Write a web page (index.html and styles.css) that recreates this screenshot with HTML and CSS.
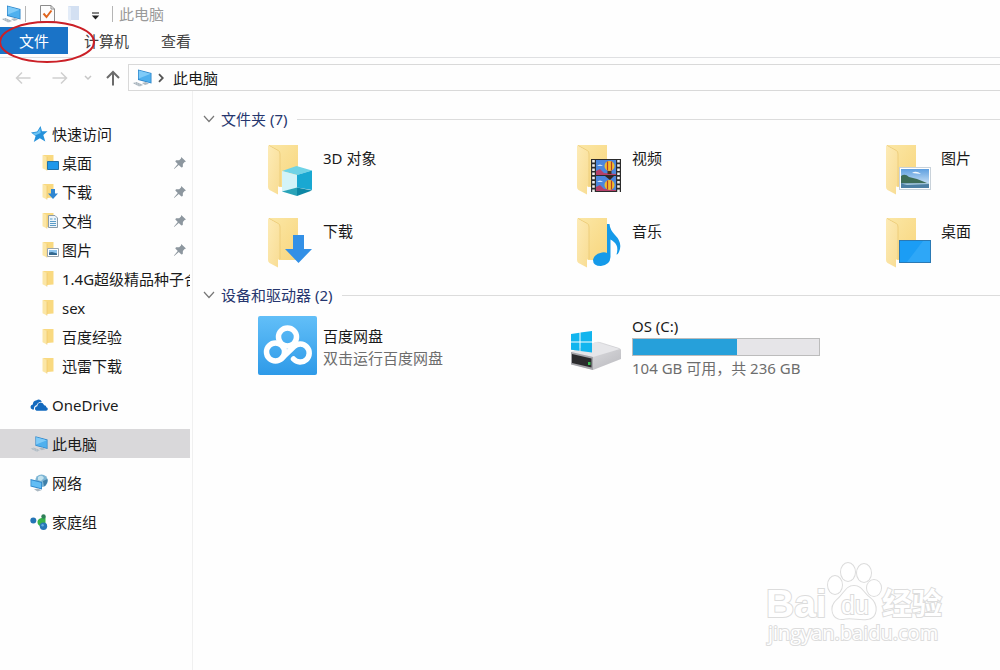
FILE: index.html
```html
<!DOCTYPE html>
<html lang="zh-CN">
<head>
    <meta charset="utf-8">
    <title>此电脑</title>
    <link rel="stylesheet" href="styles.css">
</head>
<body>
    <svg class="defs" aria-hidden="true">
        <defs>
            <linearGradient id="gBack" x1="0" y1="0" x2="1" y2="1"><stop offset="0" stop-color="#fbe7a6"/><stop offset="1" stop-color="#f8d67e"/></linearGradient>
            <linearGradient id="gFront" x1="0" y1="0" x2="1" y2="1"><stop offset="0" stop-color="#fdebb6"/><stop offset="1" stop-color="#f8dc92"/></linearGradient>
            <linearGradient id="gPan" x1="0" y1="0" x2="0" y2="1"><stop offset="0" stop-color="#62bff8"/><stop offset="1" stop-color="#2e9ae8"/></linearGradient>
            <linearGradient id="gSky" x1="0" y1="0" x2="0" y2="1"><stop offset="0" stop-color="#5e9fe0"/><stop offset="1" stop-color="#e4f1fb"/></linearGradient>
            <linearGradient id="gDisk" x1="0" y1="0" x2="1" y2="1"><stop offset="0" stop-color="#e9e9eb"/><stop offset="1" stop-color="#b9b9be"/></linearGradient>
        </defs>
        <symbol id="pc" viewBox="0 0 20 18">
            <path d="M6 .5 19.500 4V14.500L6 11Z" fill="#2f86c9"/>
            <path d="M6.800 1.600 18.700 4.700V13.400L6.800 10.300Z" fill="#4fb0ee"/>
            <path d="M6.800 1.600 18.700 4.700 6.800 9.500Z" fill="#7fcbf8"/>
            <path d="M10 14 14 13 17 14.800 13 16Z" fill="#aeb9c2"/>
            <path d="M.5 14 4.500 13 11.500 16 7 17.500Z" fill="#c3ccd3"/>
            <path d="M2 14.200 8.500 16.800M4 13.600 10 16.200" stroke="#8d9aa5" stroke-width=".6" stroke-dasharray="1.2 .8"/>
        </symbol>
        <symbol id="mini" viewBox="0 0 17 17">
            <path d="M1 1H11.500V14.500L5 15Z" fill="#f9d980"/>
            <path d="M.5 1 5 3V16.500L.5 14.200Z" fill="#fbe6a6"/>
            <path d="M5 3V16.500" stroke="#ecc462" stroke-width=".6"/>
        </symbol>
        <symbol id="folder" viewBox="0 0 46 54">
            <path d="M1 1H31V43H12V8Z" fill="url(#gBack)"/>
            <path d="M1 1.500 11.500 7Q13 8 13 10V41L11 43V50.500L2.500 46Q1 45 1 43Z" fill="url(#gFront)"/>
            <path d="M2 1.500 11.500 6.600Q13 7.500 13 10V42" fill="none" stroke="#ebc973" stroke-width=".8"/>
        </symbol>
        <symbol id="pin" viewBox="0 0 14 14">
            <path d="M8.2 1 13 5.6 11.6 6 9.9 8 9.8 11 8.4 11.6 5.8 9 1.2 13 1 12.6 4.8 8 2.3 5.6 3 4.2 6.2 4.2 8 2.5Z" fill="#8d979f"/>
        </symbol>
    </svg>

    <header class="titlebar">
        <svg class="pc-icon"><use href="#pc"/></svg>
        <span class="sep"></span>
        <svg class="doc-icon" viewBox="0 0 15 17">
            <path d="M.5.5H11L14.5 4V16.5H.5Z" fill="#fdfdfd" stroke="#8c8c8c"/>
            <path d="M11 .5V4H14.5" fill="none" stroke="#8c8c8c"/>
            <path d="M3.5 8.5 6.5 12 11.5 5.5" fill="none" stroke="#e0661f" stroke-width="2"/>
        </svg>
        <svg class="pale-icon" viewBox="0 0 13 17">
            <path d="M1 1H12V15H4Z" fill="#d3e0f2"/>
            <path d="M1 1 4 2.5V16.5L1 14.5Z" fill="#e3ecf8"/>
        </svg>
        <svg class="drop-icon" viewBox="0 0 9 8">
            <path d="M1 1H8" stroke="#333" stroke-width="1.2"/>
            <path d="M.8 3.6H8.2L4.5 7.4Z" fill="#222"/>
        </svg>
        <span class="sep"></span>
        <span class="title">此电脑</span>
    </header>

    <nav class="ribbon">
        <button class="tab tab-file">文件</button>
        <button class="tab">计算机</button>
        <button class="tab">查看</button>
        <svg class="mark" viewBox="0 0 98 44"><ellipse cx="47" cy="22" rx="47" ry="20" fill="none" stroke="#cb2027" stroke-width="2"/></svg>
    </nav>

    <div class="toolbar">
        <button class="nav-btn" aria-label="后退"><svg class="arrow" viewBox="0 0 16 14"><path d="M15.5 7H1.5M7 1.5 1.5 7 7 12.5" fill="none" stroke="#cfcfcf" stroke-width="1.5"/></svg></button>
        <button class="nav-btn" aria-label="前进"><svg class="arrow" viewBox="0 0 16 14"><path d="M.5 7H14.5M9 1.5 14.5 7 9 12.5" fill="none" stroke="#cfcfcf" stroke-width="1.5"/></svg></button>
        <button class="nav-btn nav-recent" aria-label="最近"><svg viewBox="0 0 8 6"><path d="M1 1 4 4 7 1" fill="none" stroke="#c6c6c6" stroke-width="1.5"/></svg></button>
        <button class="nav-btn nav-up" aria-label="向上"><svg viewBox="0 0 14 16"><path d="M7 15.5V2M1 8 7 2 13 8" fill="none" stroke="#6b6b6b" stroke-width="2"/></svg></button>
        <div class="address">
            <svg class="pc-icon"><use href="#pc"/></svg>
            <svg class="crumb" viewBox="0 0 6 10"><path d="M1 1.2 4.8 5 1 8.8" fill="none" stroke="#555" stroke-width="1.8"/></svg>
            <span>此电脑</span>
        </div>
    </div>

    <div class="body">
        <aside class="side">
            <ul class="tree">
                <li class="row root">
                    <svg class="root-icon" viewBox="0 0 18 18"><path d="M10.500 1 12 6.200 17.500 6.200 13.300 10 15.300 16.500 9.800 13.200 3.800 17 5.600 11 1 7.400 7.200 6.600Z" fill="#2591da"/><path d="M10.300 3 10.600 8 5 10.600 3 8 7.600 7.300Z" fill="#6cc3f3"/></svg>
                    <span>快速访问</span>
                </li>
                <li class="row">
                    <svg class="mini-icon" viewBox="0 0 17 17"><use href="#mini" width="17" height="17"/><path d="M5.5 7.5H16.5V15.5H5.5Z" fill="#1f98ea" stroke="#2272a8"/></svg>
                    <span class="name">桌面</span><svg class="pin"><use href="#pin"/></svg>
                </li>
                <li class="row">
                    <svg class="mini-icon" viewBox="0 0 17 17"><use href="#mini" width="17" height="17"/><path d="M9 6H13V10.5H16L11 16 6 10.5H9Z" fill="#2f86d1"/></svg>
                    <span class="name">下载</span><svg class="pin"><use href="#pin"/></svg>
                </li>
                <li class="row">
                    <svg class="mini-icon" viewBox="0 0 17 17"><use href="#mini" width="17" height="17"/><path d="M6.5 3.5H13L15.5 6V15.5H6.5Z" fill="#eef5fa" stroke="#8a9ba8"/><path d="M8 7H10.5M8 9.5H14M8 11.5H14M8 13.5H14M12 7H14" stroke="#5b9cc7"/></svg>
                    <span class="name">文档</span><svg class="pin"><use href="#pin"/></svg>
                </li>
                <li class="row">
                    <svg class="mini-icon" viewBox="0 0 17 17"><use href="#mini" width="17" height="17"/><path d="M5.5 7.5H16.5V15.5H5.5Z" fill="#fff" stroke="#9aa5ad"/><path d="M7 9H15V14H7Z" fill="#8dc4ee"/><path d="M7 11.5 10 11 15 12.5V14H7Z" fill="#33688f"/></svg>
                    <span class="name">图片</span><svg class="pin"><use href="#pin"/></svg>
                </li>
                <li class="row"><svg class="mini-icon"><use href="#mini"/></svg><span class="name">1.4G超级精品种子合</span></li>
                <li class="row"><svg class="mini-icon"><use href="#mini"/></svg><span class="name">sex</span></li>
                <li class="row"><svg class="mini-icon"><use href="#mini"/></svg><span class="name">百度经验</span></li>
                <li class="row"><svg class="mini-icon"><use href="#mini"/></svg><span class="name">迅雷下载</span></li>
            </ul>
            <ul class="tree roots">
                <li class="row root">
                    <svg class="root-icon" viewBox="0 0 18 18"><path d="M2.500 13.500Q.3 13 .5 10.800.8 8.800 2.800 8.600 3 4.800 6.600 4.300 9.500 2.200 12 5.800 8 5.500 6.500 9.300 3.500 10 4 13.500Z" fill="#1269be"/><path d="M6.500 14.800Q4.600 14 5 12 5.400 10.400 7.300 10.200 7.600 7 10.600 6.600 13.200 6.600 14.200 9.200 16.200 9.200 16.400 11.200 18 11.800 17.800 13.200 17.600 14.600 16 14.800Z" fill="#1269be"/></svg>
                    <span>OneDrive</span>
                </li>
                <li class="row root selected"><svg class="root-icon"><use href="#pc"/></svg><span>此电脑</span></li>
                <li class="row root">
                    <svg class="root-icon" viewBox="0 0 18 18"><circle cx="11.500" cy="6.800" r="6.300" fill="#7db5d4"/><path d="M8 3Q12 0 14 4L11 7 8 6Z" fill="#c2e2ee"/><path d="M13 7 17.500 5Q18 10 14 12.500Z" fill="#3f7fa8"/><path d="M.5 5 12 8V15.500L.5 12.500Z" fill="#2f86c9"/><path d="M1.300 6.200 11.200 8.800V14.300L1.300 11.700Z" fill="#62bdf4"/><path d="M4 15.200 8 14.500 11.500 16.300 7.500 17.500Z" fill="#aab8c2"/></svg>
                    <span>网络</span>
                </li>
                <li class="row root">
                    <svg class="root-icon" viewBox="0 0 18 18"><circle cx="3.300" cy="7.500" r="3" fill="#2474b5"/><path d="M7.500 8.500Q8 5.500 11.500 5L15.500 4V11.500L12 14Q7 12 7.500 8.500Z" fill="#37b34a"/><circle cx="13.500" cy="3.500" r="2.200" fill="#2f7f58"/><circle cx="13.500" cy="13.200" r="3.700" fill="#2777b8"/><circle cx="12.600" cy="12.200" r="1.200" fill="#62aee0"/></svg>
                    <span>家庭组</span>
                </li>
            </ul>
        </aside>

        <main class="content">
            <h2 class="group"><svg class="fold" viewBox="0 0 12 8"><path d="M1 1 6 6.5 11 1" fill="none" stroke="#777" stroke-width="1.2"/></svg>文件夹 (7)</h2>
            <div class="grid folders">
                <div class="item">
                    <svg class="big-icon" viewBox="0 0 46 54"><use href="#folder" width="46" height="54"/>
                        <path d="M15 27 29.500 22 45 26.500 30 31Z" fill="#6fd3e6"/><path d="M15 27 30 31V43.500L15 48Z" fill="#d3f3f8"/><path d="M30 31 45 26.500V46L30 43.500Z" fill="#19a8d2"/><path d="M15 47.500 30 43.500V52Z" fill="#29a3b8"/><path d="M30 43.500 45 46.500 30 52Z" fill="#0d87a5"/>
                    </svg>
                    <span class="label">3D 对象</span>
                </div>
                <div class="item">
                    <svg class="big-icon" viewBox="0 0 46 54"><use href="#folder" width="46" height="54"/>
                        <rect x="15" y="15" width="30" height="33" fill="#2b2b2b"/>
                        <rect x="20" y="16" width="20" height="15" fill="#4a86dc"/><rect x="20" y="32" width="20" height="15" fill="#4a86dc"/>
                        <path d="M17.500 16V48M42.500 16V48" stroke="#f2f2f2" stroke-width="2.600" stroke-dasharray="2.500 1.700"/>
                        <path d="M20 27 24 25 28 29 40 30V31H20ZM20 43 24 41 28 45 40 46V47H20Z" fill="#b5406a"/>
                        <circle cx="33.500" cy="22" r="5" fill="#f0bd30"/><path d="M31.500 17.500V26.500M35.500 17.500V26.500" stroke="#b93b25" stroke-width="1.200"/><path d="M31.500 27H35.500V30H31.500Z" fill="#4b2d18"/>
                        <circle cx="33.500" cy="41" r="5" fill="#f0bd30"/><path d="M31.500 36.500V45.500M35.500 36.500V45.500" stroke="#b93b25" stroke-width="1.200"/><path d="M29 32H38L34 36Z" fill="#38251c"/>
                        <path d="M21 22Q24 19 27 22Z M21 38Q24 35 27 38Z" fill="#cfe2f8"/>
                    </svg>
                    <span class="label">视频</span>
                </div>
                <div class="item">
                    <svg class="big-icon" viewBox="0 0 46 54"><use href="#folder" width="46" height="54"/>
                        <rect x="14.500" y="23.500" width="31" height="22" fill="#fff" stroke="#c9d2da"/>
                        <rect x="16" y="25" width="28" height="19" fill="url(#gSky)"/>
                        <path d="M16 32Q20 29 24 33L32 35 42 39H16Z" fill="#3e6d58"/><path d="M16 39H44V44H16Z" fill="#4d7fa3"/><path d="M16 39.500 44 39V40L22 41Z" fill="#a8c9da"/><path d="M27 29Q31 26 36 30Z" fill="#f3f8fd"/>
                    </svg>
                    <span class="label">图片</span>
                </div>
                <div class="item">
                    <svg class="big-icon" viewBox="0 0 46 54"><use href="#folder" width="46" height="54"/><path d="M26 18H37V32H45L31.500 46 18 32H26Z" fill="#3390e6"/></svg>
                    <span class="label">下载</span>
                </div>
                <div class="item">
                    <svg class="big-icon" viewBox="0 0 46 54"><use href="#folder" width="46" height="54"/><path d="M31 7H33.500Q34 13 39 18 47 26 43 35 41.500 38 40.500 37.500 43 29 38 25 36 23 34.500 22.500V40Q34 48 25 49 17 49 17 43 18 37 26 35.500 29 35 31 36Z" fill="#159ae9"/></svg>
                    <span class="label">音乐</span>
                </div>
                <div class="item">
                    <svg class="big-icon" viewBox="0 0 46 54"><use href="#folder" width="46" height="54"/><rect x="14.500" y="23.500" width="31" height="22" fill="#1b9df5" stroke="#2a79b4"/><path d="M22 45 38 24H45V45Z" fill="#2ea7f7"/></svg>
                    <span class="label">桌面</span>
                </div>
            </div>

            <h2 class="group"><svg class="fold" viewBox="0 0 12 8"><path d="M1 1 6 6.5 11 1" fill="none" stroke="#777" stroke-width="1.2"/></svg>设备和驱动器 (2)</h2>
            <div class="grid drives">
                <div class="item">
                    <svg class="drive-icon" viewBox="0 0 59 59">
                        <rect width="59" height="59" rx="2" fill="url(#gPan)"/>
                        <g fill="none" stroke="#fff" stroke-width="5.500">
                            <circle cx="29.500" cy="21" r="9"/>
                            <circle cx="17.500" cy="36" r="9"/>
                            <path d="M23.500 42.500 36 30.500A9 9 0 1 1 35.500 43" stroke-linecap="round"/>
                        </g>
                    </svg>
                    <div class="info">
                        <span>百度网盘</span>
                        <span class="sub">双击运行百度网盘</span>
                    </div>
                </div>
                <div class="item">
                    <svg class="drive-icon" viewBox="0 0 59 59">
                        <path d="M4 36 29 26Q31 25.500 33 26L52 32Q54 33 54 34V43L26 54 4 48Z" fill="url(#gDisk)"/>
                        <path d="M4 36 29 26 53 33 26 41Z" fill="#e6e6e9"/>
                        <path d="M4 36 26 41V54L4 48.500Z" fill="#a3a3a8"/>
                        <path d="M5 38 24.500 42.500V51.500L5 47Z" fill="#2b2b2d"/><rect x="21" y="46" width="2.500" height="3" fill="#39c052"/>
                        <path d="M4 18 12.500 16.800V25.500H4ZM13.500 16.600 25 15V25.500H13.500ZM4 26.500H12.500V34.800L4 33.800ZM13.500 26.500H25V36.500L13.500 35Z" fill="#12b5ee"/>
                    </svg>
                    <div class="info">
                        <label for="osUsed">OS (C:)</label>
                        <progress id="osUsed" value="132" max="236"></progress>
                        <span class="sub">104 GB 可用，共 236 GB</span>
                    </div>
                </div>
            </div>
        </main>
    </div>

    <svg class="watermark" viewBox="0 0 190 90">
        <g fill="#fff" stroke="#dcdcdc" stroke-width="2" paint-order="stroke">
            <text class="wm-bai" x="3" y="57">Bai</text>
            <ellipse cx="72" cy="25" rx="7" ry="9"/>
            <ellipse cx="85" cy="12" rx="7" ry="9"/>
            <ellipse cx="101" cy="13" rx="7" ry="9"/>
            <ellipse cx="111" cy="28" rx="7" ry="8"/>
            <path d="M91 26C99 26 100 33 107 38 115 44 115 58 104 59 96 60 88 57 80 59 69 60 66 47 74 40 82 33 83 26 91 26Z"/>
            <text class="wm-du" x="78" y="54">du</text>
            <text class="wm-cn" x="119" y="54">经验</text>
            <text class="wm-url" x="5" y="80">jingyan.baidu.com</text>
        </g>
    </svg>
</body>
</html>
```
FILE: styles.css
```css
* {
    box-sizing: border-box;
}

body {
    display: flex;
    flex-direction: column;
    position: relative;
    min-height: 100vh;
    margin: 0;
    overflow: hidden;
    background-color: #fefefe;
    color: #1a1a1a;
    font-family: "Noto Sans", "Noto Sans CJK SC", sans-serif;
    font-size: 15px;
    line-height: 20px;
}

button {
    border: none;
    padding: 0;
    background: none;
    font: inherit;
}

svg {
    display: block;
    flex: none;
}

.defs {
    position: absolute;
    width: 0;
    height: 0;
}

.pc-icon {
    width: 20px;
    height: 18px;
}

/* title bar */
.titlebar {
    display: flex;
    align-items: center;
    height: 27px;
    padding-left: 1px;
}

.sep {
    width: 1px;
    height: 16px;
    margin: 0 6px 0 4px;
    background-color: #b5b5b5;
}

.doc-icon {
    width: 15px;
    height: 17px;
    margin-left: 8px;
}

.pale-icon {
    width: 13px;
    height: 17px;
    margin-left: 12px;
}

.drop-icon {
    width: 9px;
    height: 8px;
    margin: 4px 8px 0 11px;
}

.title {
    color: #9a9a9a;
}

/* ribbon */
.ribbon {
    display: flex;
    position: relative;
    height: 31px;
    padding-bottom: 3px;
    border-bottom: 1px solid #dfe0e2;
}

.tab {
    padding: 0 16px;
    color: #444;
}

.tab-file {
    width: 68px;
    background-color: #1a73c7;
    color: #fff;
}

.mark {
    position: absolute;
    left: 0;
    top: -7px;
    width: 98px;
    height: 44px;
}

/* navigation and address */
.toolbar {
    display: flex;
    align-items: center;
    padding: 6px 0 0 15px;
}

.nav-btn {
    width: 16px;
    margin-right: 21px;
}

.nav-btn svg {
    width: 100%;
}

.nav-btn + .nav-btn {
    margin-right: 16px;
}

.toolbar .nav-recent {
    width: 8px;
    margin-right: 14px;
}

.toolbar .nav-up {
    width: 14px;
    margin-right: 8px;
}

.address {
    display: flex;
    align-items: center;
    flex: 1;
    height: 27px;
    padding-left: 3px;
    border: 1px solid #d9d9d9;
    border-right: none;
}

.crumb {
    width: 6px;
    height: 10px;
    margin: 0 9px 0 6px;
}

/* body */
.body {
    display: flex;
    flex: 1;
}

.side {
    flex: none;
    width: 193px;
    padding: 28px 2px 0 0;
    border-right: 1px solid #f0f0f0;
}

.tree {
    margin: 0;
    padding: 0;
    list-style: none;
}

.row {
    display: flex;
    align-items: center;
    height: 29px;
    padding-left: 42px;
}

.root {
    padding-left: 30px;
}

.root-icon {
    width: 18px;
    height: 18px;
    margin-right: 4px;
}

.mini-icon {
    width: 17px;
    height: 17px;
    margin-right: 3px;
}

.name {
    flex: 1;
    overflow: hidden;
    white-space: nowrap;
}

.pin {
    width: 14px;
    height: 14px;
    margin-right: 3px;
}

.roots .row {
    margin-top: 10px;
}

.selected {
    background-color: #d9d8da;
}

.content {
    flex: 1;
    min-width: 0;
    overflow: hidden;
    padding: 18px 0 0 10px;
}

.group {
    display: flex;
    align-items: center;
    margin: 0;
    color: #26366e;
    font-size: 15px;
    font-weight: normal;
}

.group::after {
    content: "";
    flex: 1;
    height: 1px;
    margin-left: 10px;
    background-color: #dcdcdc;
}

.fold {
    width: 12px;
    height: 8px;
    margin-right: 6px;
}

.grid {
    display: grid;
    grid-template-columns: repeat(3, 309px);
    padding-left: 55px;
}

.folders {
    grid-template-rows: 73px 66px;
    padding-top: 15px;
    padding-bottom: 2px;
}

.item {
    display: flex;
}

.big-icon {
    width: 46px;
    height: 54px;
    margin: 0 10px 0 9px;
}

.label {
    padding-top: 4px;
}

.drives {
    padding-top: 11px;
}

.drive-icon {
    width: 59px;
    height: 59px;
    margin-right: 6px;
}

.info {
    display: flex;
    flex-direction: column;
    justify-content: center;
    gap: 2px;
    padding-bottom: 4px;
}

.sub {
    color: #6d6d6d;
}

progress {
    width: 188px;
    height: 18px;
    border: 1px solid #bcbcbc;
    background-color: #e6e5e8;
    appearance: none;
}

progress::-webkit-progress-bar {
    background-color: #e6e5e8;
}

progress::-webkit-progress-value {
    background-color: #26a0da;
}

/* watermark */
.watermark {
    position: absolute;
    right: 47px;
    bottom: 20px;
    width: 190px;
    height: 90px;
}

.wm-bai {
    font: bold 39px "Liberation Sans", sans-serif;
}

.wm-du {
    font: 25px "Liberation Sans", sans-serif;
}

.wm-cn {
    font: bold 30px "Noto Sans CJK SC", sans-serif;
}

.wm-url {
    font: 20px "Open Sans", sans-serif;
}
```
